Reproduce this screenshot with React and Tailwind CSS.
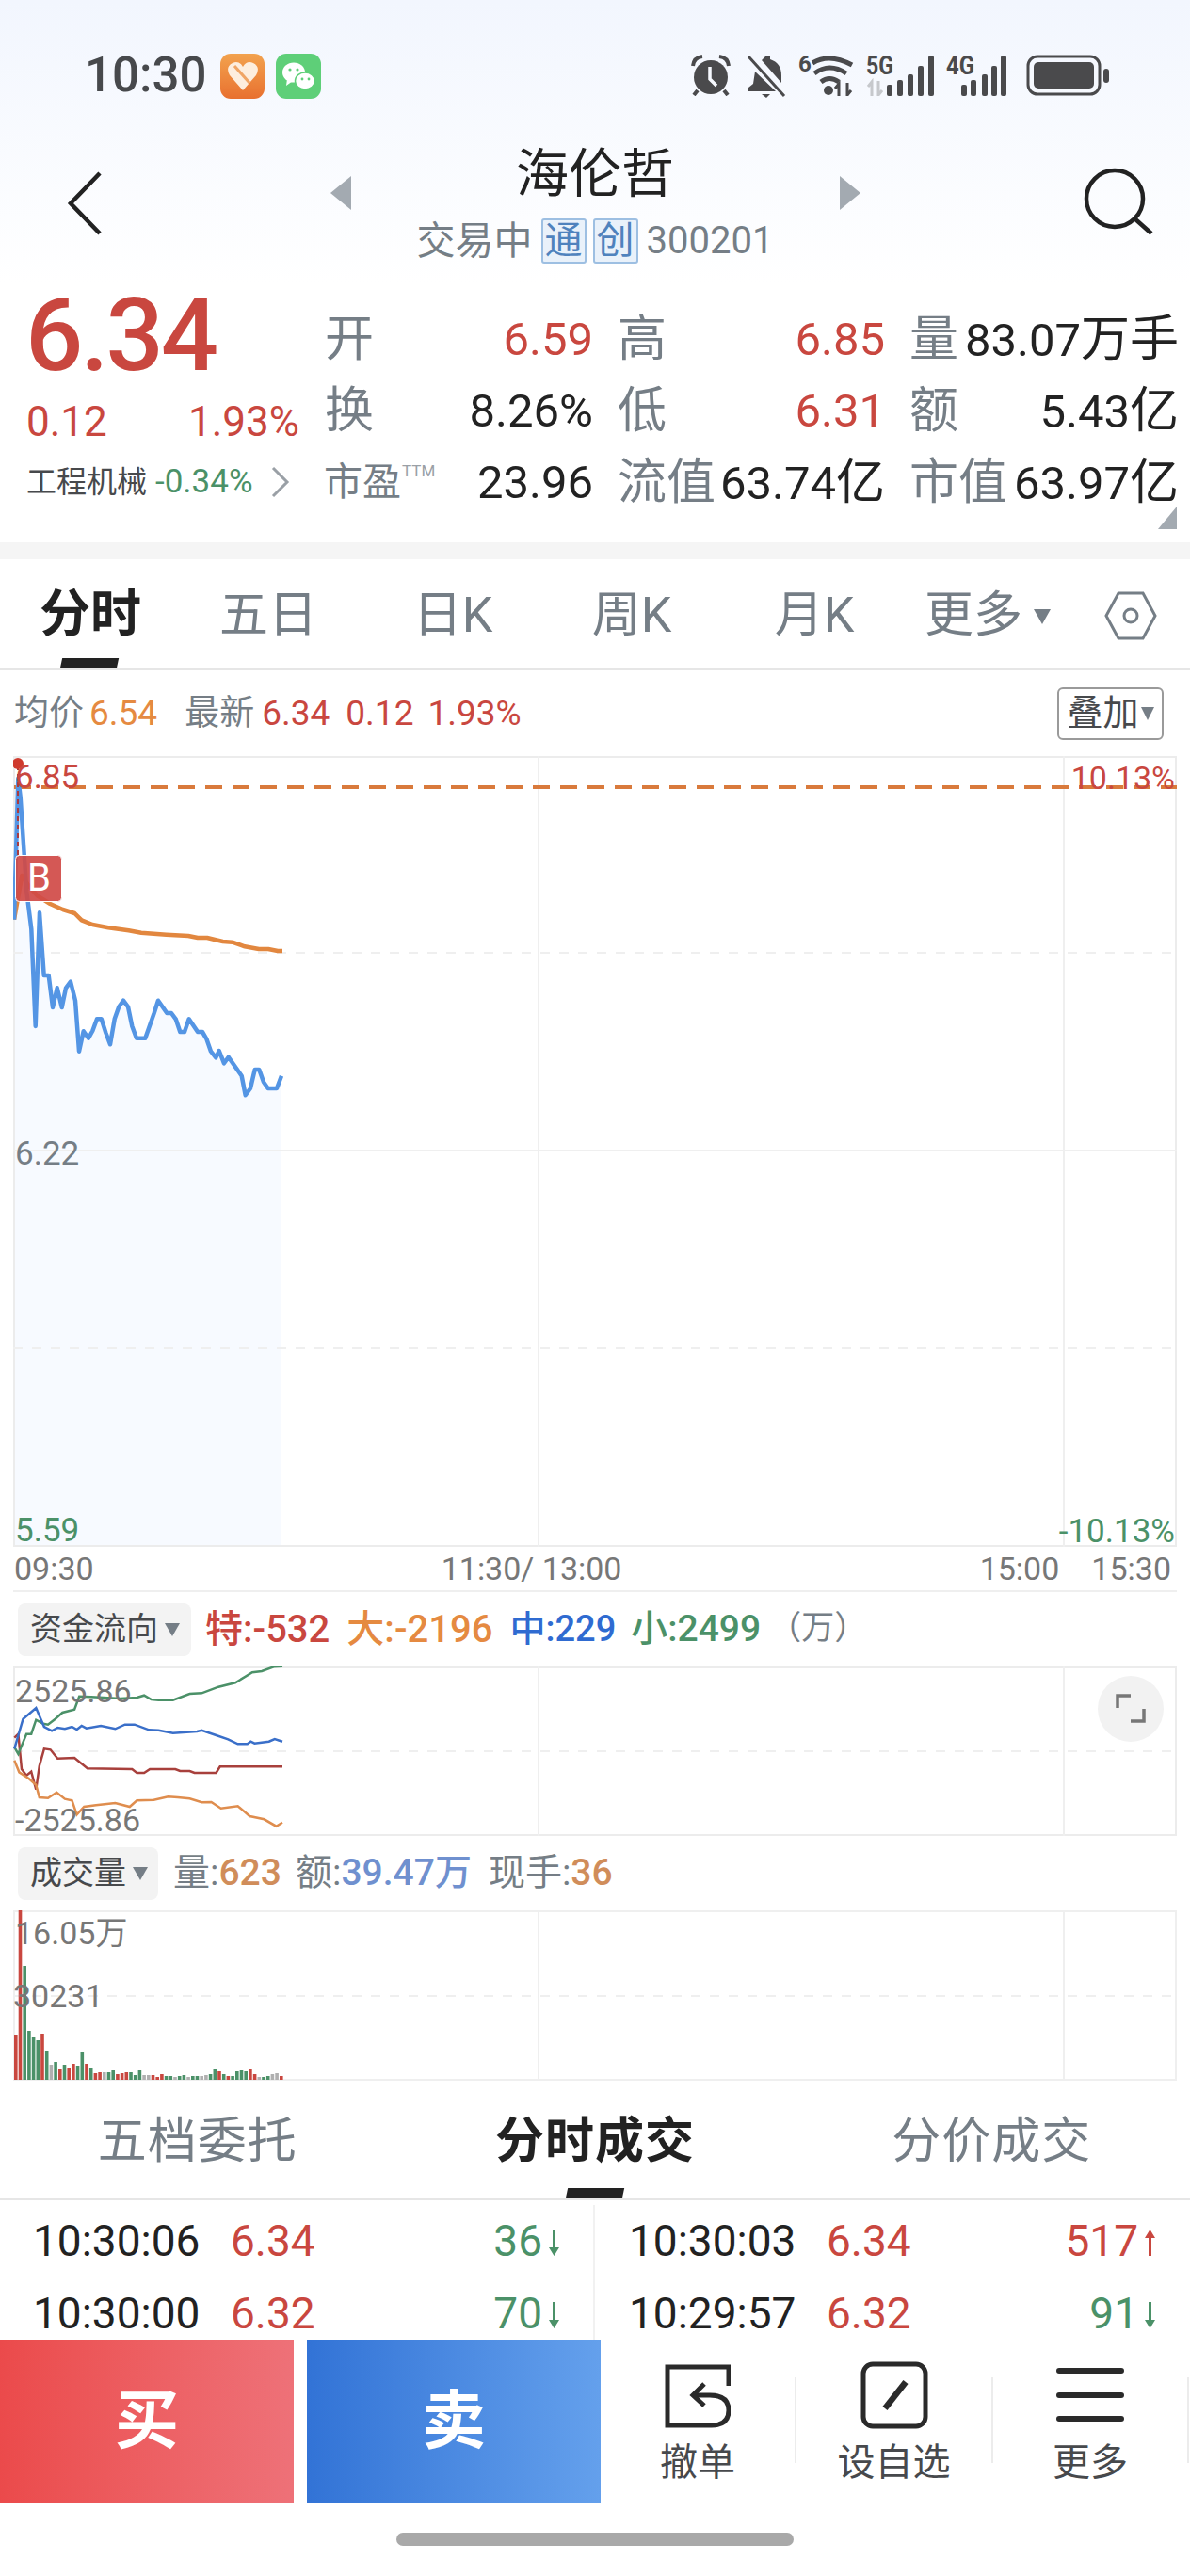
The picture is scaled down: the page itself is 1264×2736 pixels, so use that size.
const gray = "text-[#757e86]";
const red = "text-[#c9473f]";
const green = "text-[#4b9168]";

const bluePts = [[45,590],[58,140],[65,200],[85,500],[100,620],[113,930],[126,568],[140,768],[155,768],[168,870],[182,808],[197,870],[210,808],[225,788],[240,848],[252,1010],[266,946],[282,968],[295,945],[309,907],[323,907],[337,950],[351,988],[365,907],[379,868],[393,848],[408,868],[421,930],[435,968],[463,968],[491,888],[504,848],[532,888],[546,888],[560,907],[574,948],[588,948],[602,907],[630,948],[645,948],[658,970],[672,1010],[688,1030],[698,1008],[714,1048],[728,1028],[770,1088],[782,1150],[798,1128],[812,1068],[826,1068],[840,1108],[854,1128],[882,1128],[897,1088]];
const avgPts = [[45,590],[70,450],[90,480],[120,515],[160,540],[200,558],[238,570],[260,592],[295,606],[345,616],[410,625],[450,632],[530,638],[600,642],[630,648],[660,648],[710,660],[740,662],[780,676],[825,684],[855,684],[885,690],[900,690]];

const flowGreen = [[30,770],[38,792],[55,728],[65,728],[75,683],[90,695],[100,698],[115,680],[130,660],[155,650],[165,608],[190,610],[250,615],[285,612],[300,605],[315,618],[330,620],[360,620],[395,600],[420,598],[455,578],[490,565],[525,532],[545,528],[570,514],[588,512]];
const flowBlue = [[30,775],[48,680],[75,645],[92,705],[108,718],[120,708],[135,712],[150,705],[160,714],[170,702],[180,710],[210,702],[240,712],[260,698],[280,698],[310,715],[330,716],[360,725],[410,720],[420,716],[450,732],[475,745],[495,760],[515,760],[522,752],[530,758],[560,752],[572,744],[588,752]];
const flowRed = [[30,740],[38,728],[45,840],[55,860],[65,848],[75,905],[82,830],[92,775],[105,778],[120,806],[155,804],[182,838],[275,840],[285,852],[300,852],[312,840],[365,840],[375,846],[395,846],[405,852],[450,852],[458,832],[588,832]];
const flowOrange = [[30,812],[40,850],[60,870],[75,890],[82,930],[100,932],[118,914],[135,935],[150,940],[160,985],[175,960],[200,955],[240,948],[270,960],[285,940],[320,938],[350,928],[370,930],[395,934],[420,946],[440,945],[460,965],[495,958],[520,990],[550,1000],[575,1022],[588,1010]];

// r red, g green, n gray; height in px
const volBars = [["r",48],["r",180],["g",121],["g",52],["g",46],["g",42],["r",49],["g",31],["n",16],["g",19],["r",12],["g",16],["r",13],["r",17],["g",15],["g",30],["r",17],["g",13],["r",7],["r",8],["n",8],["g",8],["g",10],["r",6],["r",7],["r",8],["g",8],["g",5],["g",10],["n",5],["n",5],["r",5],["r",3],["r",6],["g",4],["g",4],["n",3],["g",4],["g",5],["n",3],["g",4],["g",4],["n",4],["n",5],["g",6],["g",11],["r",9],["g",6],["r",4],["g",4],["g",9],["g",10],["g",9],["r",11],["r",6],["n",3],["g",3],["g",4],["n",6],["n",7],["r",4]];
const volColors = { r: "#c9473f", g: "#4b9168", n: "#b0b0b0" };

const mainPath = (pts) => pts.map(([x, y]) => `${(x / 3 - 14).toFixed(1)},${(780 + y / 3 - 803).toFixed(1)}`).join(" ");
const flowPath = (pts) => pts.map(([x, y]) => `${(x / 1.96 - 14).toFixed(1)},${(1600 + y / 3 - 1771).toFixed(1)}`).join(" ");

function Alarm() {
  return (
    <svg width="44" height="44" viewBox="0 0 44 44" fill="#4a4a4c">
      <circle cx="22" cy="24" r="18" />
      <path d="M3 12 Q4 3 13 2 M41 12 Q40 3 31 2" stroke="#4a4a4c" strokeWidth="4" fill="none" />
      <path d="M8 38 L4 43 M36 38 L40 43" stroke="#4a4a4c" strokeWidth="4" />
      <path d="M21 13 V26 L28 33" stroke="#f6f9fe" strokeWidth="3.5" fill="none" />
    </svg>
  );
}

function BellOff() {
  return (
    <svg width="42" height="46" viewBox="0 0 42 46" fill="#4a4a4c" className="ml-[16px]">
      <path d="M20 2 h5 v3 Q37 9 37 22 V30 L16 6 Z" />
      <path d="M9 18 L31 39 H2 V35 L7 31 Z" />
      <path d="M16 42 h9 L21 46 Z" />
      <path d="M2 2 L40 44" stroke="#4a4a4c" strokeWidth="3" />
    </svg>
  );
}

function Wifi() {
  return (
    <svg width="62" height="50" viewBox="0 -6 62 50" fill="none" stroke="#4a4a4c" strokeWidth="5" className="ml-[13px] -mt-[6px]">
      <text x="0" y="18" fill="#4a4a4c" stroke="none" fontSize="24" fontWeight="700" fontFamily="Roboto">6</text>
      <path d="M15 9 Q33 -2 57 11" />
      <path d="M17 20 Q33 8 51 20" />
      <path d="M24 29 Q33 22 43 29" />
      <circle cx="32" cy="38" r="5" fill="#4a4a4c" stroke="none" />
      <path d="M43 44 V31 L39 36 M52 30 V43 L56 38" strokeWidth="3" />
    </svg>
  );
}

function Signal5G() {
  const bars = [[22, 12], [33, 17], [44, 23], [55, 32], [66, 43]];
  return (
    <svg width="72" height="50" viewBox="0 -6 72 50" fill="#4a4a4c" className="ml-[10px] -mt-[6px]">
      <text x="0" y="21" fontSize="28" fontWeight="700" fontFamily="Roboto" textLength="29" lengthAdjust="spacingAndGlyphs">5G</text>
      <path d="M6 44 V29 L2 34 M13 28 V43 L17 38" stroke="#c6c8cc" strokeWidth="3" fill="none" />
      {bars.map(([x, h]) => <rect key={x} x={x} y={44 - h} width="6" height={h} rx="2" />)}
    </svg>
  );
}

function Signal4G() {
  const bars = [[16, 12], [26, 17], [38, 23], [48, 32], [58, 43]];
  return (
    <svg width="66" height="50" viewBox="0 -6 66 50" fill="#4a4a4c" className="ml-[13px] -mt-[6px]">
      <text x="0" y="21" fontSize="28" fontWeight="700" fontFamily="Roboto" textLength="30" lengthAdjust="spacingAndGlyphs">4G</text>
      {bars.map(([x, h]) => <rect key={x} x={x} y={44 - h} width="6" height={h} rx="2" />)}
    </svg>
  );
}

function Battery() {
  return (
    <svg width="88" height="44" viewBox="0 0 88 44" className="ml-[19px]">
      <rect x="2" y="2" width="76" height="40" rx="10" fill="none" stroke="#4a4a4c" strokeWidth="3" />
      <rect x="8" y="8" width="64" height="28" rx="5" fill="#4a4a4c" />
      <rect x="82" y="15" width="6" height="15" rx="3" fill="#4a4a4c" />
    </svg>
  );
}

function StatusBar() {
  return (
    <div className="h-[140px] flex items-start pt-[57px] pl-[90px] pr-[86px]">
      <span className="text-[51px] leading-[46px] font-medium text-[#47494c] w-[144px]">10:30</span>
      <div className="w-[47px] h-[48px] rounded-[11px] bg-gradient-to-b from-[#f2a24e] to-[#e8702f] flex items-center justify-center">
        <svg width="34" height="32" viewBox="0 0 34 32">
          <path d="M17 31 L3 15 Q-2 6 6 2 Q13 -1 17 6 Q21 -1 28 2 Q36 6 31 15 Z" fill="#fdeede" />
          <path d="M8 5 L24 23" stroke="#f0a565" strokeWidth="3" />
        </svg>
      </div>
      <div className="w-[48px] h-[48px] ml-[12px] rounded-[11px] bg-[#5ecf78] flex items-center justify-center">
        <svg width="36" height="32" viewBox="0 0 36 32" fill="#ffffff">
          <ellipse cx="13" cy="12" rx="12" ry="10.5" />
          <path d="M6 19 L5 26 L12 21 Z" />
          <ellipse cx="25" cy="21" rx="10.5" ry="9" stroke="#5ecf78" strokeWidth="1.5" />
          <circle cx="9" cy="9" r="1.6" fill="#5ecf78" />
          <circle cx="17" cy="9" r="1.6" fill="#5ecf78" />
          <circle cx="22" cy="19" r="1.4" fill="#5ecf78" />
          <circle cx="29" cy="19" r="1.4" fill="#5ecf78" />
        </svg>
      </div>
      <div className="ml-auto flex items-start mt-[1px]">
        <Alarm />
        <BellOff />
        <Wifi />
        <Signal5G />
        <Signal4G />
        <Battery />
      </div>
    </div>
  );
}

function Header() {
  return (
    <div className="h-[160px] flex relative">
      <svg width="40" height="70" viewBox="0 0 40 70" fill="none" stroke="#222" strokeWidth="4.5" className="absolute left-[70px] top-[41px]">
        <path d="M36 3 L5 35 L36 67" />
      </svg>
      <svg width="22" height="36" viewBox="0 0 22 36" fill="#a3aab1" className="absolute left-[351px] top-[47px]"><path d="M22 0 V36 L0 18 Z" /></svg>
      <svg width="22" height="36" viewBox="0 0 22 36" fill="#a3aab1" className="absolute left-[892px] top-[47px]"><path d="M0 0 V36 L22 18 Z" /></svg>
      <svg width="74" height="72" viewBox="0 0 74 72" fill="none" stroke="#222" strokeWidth="4.5" className="absolute left-[1151px] top-[38px]">
        <circle cx="33" cy="33" r="30" />
        <path d="M54 54 L72 70" />
      </svg>
      <div className="w-full flex flex-col items-center">
        <div className="text-[56px] leading-[64px] mt-[13px] text-[#222]">海伦哲</div>
        <div className="flex items-center mt-[15px] text-[40px] leading-[48px] text-[#757e86]">
          <span className="text-[41px]">交易中</span>
          <span className="w-[48px] h-[48px] ml-[9px] rounded-[3px] border-2 border-[#9dbfe2] bg-[#e9f1fa] text-[#4f82bd] flex items-center justify-center">通</span>
          <span className="w-[48px] h-[48px] ml-[7px] rounded-[3px] border-2 border-[#9dbfe2] bg-[#e9f1fa] text-[#4f82bd] flex items-center justify-center">创</span>
          <span className="ml-[9px]">300201</span>
        </div>
      </div>
    </div>
  );
}

function QuoteCell({ label, value, unit, color = "text-[#222]" }) {
  return (
    <div className="flex justify-between items-center h-[76px] whitespace-nowrap">
      <span className={`text-[52px] ${gray}`}>{label}</span>
      <span className={`text-[49px] ${color}`}>{value}{unit && <span className="text-[52px]">{unit}</span>}</span>
    </div>
  );
}

function Quote() {
  return (
    <div className="h-[276px] flex pl-[27px] pr-[12px] relative">
      <div className="w-[318px] shrink-0 flex flex-col">
        <div className={`text-[108px] leading-[108px] mt-[2px] font-medium tracking-[-3px] ${red}`}>6.34</div>
        <div className={`flex justify-between w-[291px] text-[44px] leading-[50px] mt-[13px] pl-[1px] ${red}`}>
          <span>0.12</span>
          <span>1.93%</span>
        </div>
        <div className="flex items-center mt-[19px] h-[40px] pl-[1px] whitespace-nowrap">
          <span className="text-[32px] text-[#47494c]">工程机械</span>
          <span className={`text-[35px] ml-[9px] ${green}`}>-0.34%</span>
          <svg width="22" height="36" viewBox="0 0 22 36" fill="none" stroke="#9aa0a6" strokeWidth="3" className="ml-[18px]"><path d="M3 3 L18 18 L3 33" /></svg>
        </div>
      </div>
      <div className="grid grid-cols-[285px_284px_286px] gap-x-[26px] content-start pt-[23px] flex-1">
        <QuoteCell label="开" value="6.59" color={red} />
        <QuoteCell label="高" value="6.85" color={red} />
        <QuoteCell label="量" value="83.07" unit="万手" />
        <QuoteCell label="换" value="8.26%" />
        <QuoteCell label="低" value="6.31" color={red} />
        <QuoteCell label="额" value="5.43" unit="亿" />
        <div className="flex items-center h-[76px] whitespace-nowrap">
          <span className={`text-[41px] -ml-[1px] ${gray}`}>市盈</span>
          <span className="text-[17px] ml-[1px] -mt-[24px] text-[#9aa0a6]">TTM</span>
          <span className="text-[49px] text-[#222] ml-auto">23.96</span>
        </div>
        <QuoteCell label="流值" value="63.74" unit="亿" />
        <QuoteCell label="市值" value="63.97" unit="亿" />
      </div>
      <svg width="20" height="24" viewBox="0 0 20 24" fill="#a3aab1" className="absolute right-[14px] top-[238px]"><path d="M20 0 V24 H0 Z" /></svg>
    </div>
  );
}

function ChartTabs() {
  return (
    <div className="h-[118px] flex border-b-2 border-[#e6e6e6] relative">
      <div className="w-[192px] flex flex-col items-center">
        <span className="text-[54px] leading-[60px] mt-[29px] font-bold text-[#222]">分时</span>
      </div>
      <div className={`w-[186px] text-center text-[52px] leading-[60px] pt-[30px] ${gray}`}>五日</div>
      <div className={`w-[206px] text-center text-[52px] leading-[60px] pt-[30px] ${gray}`}>日K</div>
      <div className={`w-[174px] text-center text-[52px] leading-[60px] pt-[30px] ${gray}`}>周K</div>
      <div className={`w-[214px] text-center text-[52px] leading-[60px] pt-[30px] ${gray}`}>月K</div>
      <div className={`text-[52px] leading-[60px] pt-[30px] ml-[10px] flex ${gray}`}>
        更多
        <svg width="18" height="16" viewBox="0 0 18 16" fill="#757e86" className="ml-[12px] mt-[23px]"><path d="M0 0 H18 L9 16 Z" /></svg>
      </div>
      <svg width="58" height="54" viewBox="0 0 58 54" fill="none" stroke="#757e86" strokeWidth="3" className="absolute left-[1172px] top-[33px]">
        <path d="M3 27 L16 3 H42 L55 27 L42 51 H16 Z" />
        <circle cx="29" cy="27" r="7" />
      </svg>
      <div className="absolute left-[65px] bottom-0 w-[60px] h-[11px] bg-[#222] -skew-x-12"></div>
    </div>
  );
}

function InfoRow() {
  return (
    <div className="h-[91px] flex items-center pl-[15px] pr-[28px] text-[37px] whitespace-nowrap">
      <span className={`${gray}`}>均价</span>
      <span className="ml-[6px] text-[#e58a41]">6.54</span>
      <span className={`ml-[29px] ${gray}`}>最新</span>
      <span className={`ml-[8px] ${red}`}>6.34</span>
      <span className={`ml-[17px] ${red}`}>0.12</span>
      <span className={`ml-[15px] ${red}`}>1.93%</span>
      <div className="ml-auto w-[113px] h-[56px] rounded-[6px] border-2 border-[#9a9a9a] flex items-center justify-center text-[#47494c] text-[38px]">
        叠加
        <svg width="14" height="14" viewBox="0 0 14 14" fill="#757e86" className="ml-[2px]"><path d="M0 0 H14 L7 14 Z" /></svg>
      </div>
    </div>
  );
}

function MainChart() {
  const labelClass = "absolute text-[35px] leading-[40px]";
  return (
    <div className="ml-[14px] w-[1236px] h-[840px] relative">
      <svg width="1236" height="840" viewBox="0 0 1236 840" fill="none" className="absolute left-0 top-0">
        <path d={`M2 840 L${mainPath(bluePts)} L284.5 840 Z`} fill="#f7faff" />
        <rect x="1" y="1" width="1234" height="838" stroke="#ececec" strokeWidth="2" />
        <path d="M558 0 V840 M1116 0 V840 M0 419 H1236" stroke="#efefef" strokeWidth="2" />
        <path d="M0 209 H1236 M0 629 H1236" stroke="#efefef" strokeWidth="2" strokeDasharray="10 10" />
        <path d="M1 33 H1236" stroke="#d97a3c" strokeWidth="4" strokeDasharray="18 11" />
        <polyline points={mainPath(avgPts)} stroke="#e2873f" strokeWidth="4.5" strokeLinejoin="round" />
        <polyline points={mainPath(bluePts)} stroke="#5495e4" strokeWidth="4.5" strokeLinejoin="round" />
        <path d="M5 10 V105" stroke="#a93a40" strokeWidth="2" strokeDasharray="5 4" />
        <circle cx="5" cy="8" r="6" fill="#cf3a2e" />
        <rect x="2.5" y="105.5" width="49" height="49" rx="4" fill="#d04a47" fillOpacity="0.92" stroke="#ffffff" strokeWidth="1" />
      </svg>
      <span className="absolute left-[3px] top-[105px] w-[49px] h-[49px] flex items-center justify-center text-[40px] text-white">B</span>
      <span className={`${labelClass} left-[2px] top-[3px] ${red}`}>6.85</span>
      <span className={`absolute text-[34px] leading-[40px] right-[2px] top-[3px] ${red}`}>10.13%</span>
      <span className={`${labelClass} left-[2px] top-[403px] ${gray}`}>6.22</span>
      <span className={`${labelClass} left-[2px] top-[803px] ${green}`}>5.59</span>
      <span className={`${labelClass} right-[2px] top-[804px] ${green}`}>-10.13%</span>
    </div>
  );
}

function TimeAxis() {
  return (
    <div className="ml-[14px] w-[1236px] h-[48px] flex items-center border-b-2 border-[#efefef] relative text-[34px] text-[#777] pl-[1px] pr-[6px]">
      <span>09:30</span>
      <span className="ml-[369px]">11:30/ 13:00</span>
      <span className="ml-auto">15:00</span>
      <span className="ml-[34px]">15:30</span>
    </div>
  );
}

function Dropdown({ label, width }) {
  return (
    <div className={`${width} h-[56px] rounded-[8px] bg-[#f3f3f3] flex items-center pl-[13px] text-[34px] font-normal text-[#47494c] shrink-0`}>
      {label}
      <svg width="16" height="14" viewBox="0 0 16 14" fill="#757e86" className="ml-[7px]"><path d="M0 0 H16 L8 14 Z" /></svg>
    </div>
  );
}

function FlowRow() {
  return (
    <div className="h-[79px] flex items-center pl-[19px] text-[40px] font-medium whitespace-nowrap">
      <Dropdown label="资金流向" width="w-[184px]" />
      <span className="ml-[15px] text-[#c9473f]">特:-532</span>
      <span className="ml-[18px] text-[#e58a41]">大:-2196</span>
      <span className="ml-[18px] text-[38px] text-[#2f6bd1]">中:229</span>
      <span className="ml-[16px] text-[39px] text-[#4b9168]">小:2499</span>
      <span className={`ml-[8px] text-[35px] font-normal ${gray}`}>（万）</span>
    </div>
  );
}

function FlowChart() {
  return (
    <div className="ml-[14px] w-[1236px] h-[180px] relative">
      <svg width="1236" height="180" viewBox="0 0 1236 180" fill="none" className="absolute left-0 top-0">
        <rect x="1" y="1" width="1234" height="178" stroke="#ececec" strokeWidth="2" />
        <path d="M558 0 V180 M1116 0 V180" stroke="#efefef" strokeWidth="2" />
        <path d="M0 90 H1236" stroke="#efefef" strokeWidth="2" strokeDasharray="10 10" />
        <polyline points={flowPath(flowRed)} stroke="#a8403c" strokeWidth="2.5" />
        <polyline points={flowPath(flowOrange)} stroke="#df8d4e" strokeWidth="2.5" />
        <polyline points={flowPath(flowGreen)} stroke="#4b9168" strokeWidth="2.5" />
        <polyline points={flowPath(flowBlue)} stroke="#3a6fc9" strokeWidth="2.5" />
      </svg>
      <span className="absolute left-[2px] top-[6px] text-[34px] leading-[40px] text-[#777]">2525.86</span>
      <span className="absolute left-[2px] top-[143px] text-[34px] leading-[40px] text-[#777]">-2525.86</span>
      <div className="absolute left-[1152px] top-[10px] w-[70px] h-[70px] rounded-full bg-[#f2f2f2] flex items-center justify-center">
        <svg width="32" height="32" viewBox="0 0 32 32" fill="none" stroke="#777" strokeWidth="3.5">
          <path d="M2 15 V2 H16 M30 16 V29 H16" />
        </svg>
      </div>
    </div>
  );
}

function VolumeRow() {
  return (
    <div className="h-[79px] flex items-center pl-[19px] text-[39px] font-medium whitespace-nowrap">
      <Dropdown label="成交量" width="w-[149px]" />
      <span className={`ml-[16px] font-normal ${gray}`}>量:</span>
      <span className="text-[#d08d5a]">623</span>
      <span className={`ml-[15px] font-normal ${gray}`}>额:</span>
      <span className="text-[#6f90cf]">39.47万</span>
      <span className={`ml-[18px] font-normal ${gray}`}>现手:</span>
      <span className="text-[#d08d5a]">36</span>
    </div>
  );
}

function VolumeChart() {
  return (
    <div className="ml-[14px] w-[1236px] h-[181px] relative">
      <svg width="1236" height="181" viewBox="0 0 1236 181" fill="none" className="absolute left-0 top-0">
        <path d="M0 1 H1236 M0 180 H1236 M1 0 V181 M558 0 V181 M1116 0 V181 M1235 0 V181" stroke="#efefef" strokeWidth="2" />
        <path d="M0 91 H1236" stroke="#efefef" strokeWidth="2" strokeDasharray="10 10" />
        {volBars.map(([c, h], i) => (
          <rect key={i} x={1 + i * 4.7} y={180 - h} width="3.6" height={h} fill={volColors[c]} />
        ))}
      </svg>
      <span className="absolute left-[2px] top-[4px] text-[34px] leading-[40px] text-[#777]">16.05万</span>
      <span className="absolute left-[0px] top-[71px] text-[34px] leading-[40px] text-[#777]">30231</span>
    </div>
  );
}

function TradeTabs() {
  return (
    <div className="h-[127px] grid grid-cols-3 border-b-2 border-[#e6e6e6] relative text-center text-[52px] leading-[60px] pt-[35px]">
      <span className={`text-[52px] -ml-[2px] tracking-[1px] ${gray}`}>五档委托</span>
      <span className="font-bold text-[#222] tracking-[1px]">分时成交</span>
      <span className={`tracking-[1px] ${gray}`}>分价成交</span>
      <div className="absolute left-[602px] bottom-0 w-[60px] h-[11px] bg-[#222] -skew-x-12"></div>
    </div>
  );
}

function Arrow({ up, color }) {
  return (
    <svg width="13" height="28" viewBox="0 0 13 28" fill={color} className="ml-[6px] mt-[3px]">
      {up ? <path d="M6.5 0 L12 9 H8 V28 H5 V9 H1 Z" /> : <path d="M6.5 28 L12 19 H8 V0 H5 V19 H1 Z" />}
    </svg>
  );
}

function Trade({ time, price, vol, up }) {
  const hex = up ? "#c9473f" : "#4b9168";
  return (
    <div className="h-[77px] flex items-center text-[46px] whitespace-nowrap">
      <span className="w-[210px] text-[#222]">{time}</span>
      <span className={red}>{price}</span>
      <span className={`ml-auto ${up ? red : green}`}>{vol}</span>
      <Arrow up={up} color={hex} />
    </div>
  );
}

function Trades() {
  return (
    <div className="h-[148px] grid grid-cols-2 pt-[5px]">
      <div className="pl-[35px] pr-[35px] border-r-2 border-[#f1f1f1]">
        <Trade time="10:30:06" price="6.34" vol="36" />
        <Trade time="10:30:00" price="6.32" vol="70" />
      </div>
      <div className="pl-[36px] pr-[36px]">
        <Trade time="10:30:03" price="6.34" vol="517" up />
        <Trade time="10:29:57" price="6.32" vol="91" />
      </div>
    </div>
  );
}

function BottomBar() {
  return (
    <div className="h-[173px] flex bg-white">
      <div className="w-[312px] bg-gradient-to-r from-[#eb4a4b] to-[#ee7178] flex items-center justify-center text-[68px] font-bold text-white">买</div>
      <div className="w-[312px] ml-[14px] bg-gradient-to-r from-[#3273d6] to-[#64a0ec] flex items-center justify-center text-[68px] font-bold text-white">卖</div>
      <div className="w-[206px] flex flex-col items-center pt-[25px] text-[40px] leading-[48px] text-[#47494c]">
        <svg width="70" height="70" viewBox="0 0 70 70" fill="none" stroke="#2a2a2a" strokeWidth="5">
          <path d="M68 24 V4 H3 V66 H50 Q68 66 68 50 Q68 34 48 34 H32" />
          <path d="M42 22 L30 34 L42 45" />
        </svg>
        <span className="mt-[12px]">撤单</span>
      </div>
      <div className="w-[2px] h-[91px] mt-[40px] bg-[#ececec]"></div>
      <div className="w-[207px] flex flex-col items-center pt-[23px] text-[40px] leading-[48px] text-[#47494c]">
        <svg width="72" height="72" viewBox="0 0 72 72" fill="none" stroke="#2a2a2a" strokeWidth="5">
          <rect x="3" y="3" width="66" height="66" rx="10" />
          <path d="M48 22 L26 50" strokeWidth="6.5" />
        </svg>
        <span className="mt-[12px]">设自选</span>
      </div>
      <div className="w-[2px] h-[91px] mt-[40px] bg-[#ececec]"></div>
      <div className="w-[206px] flex flex-col items-center pt-[25px] text-[40px] leading-[48px] text-[#47494c]">
        <svg width="72" height="70" viewBox="0 0 72 70" fill="none" stroke="#2a2a2a" strokeWidth="6" strokeLinecap="round">
          <path d="M3 8 H69 M3 34 H69 M3 59 H69" />
        </svg>
        <span className="mt-[12px]">更多</span>
      </div>
      <div className="w-[2px] h-[91px] mt-[40px] bg-[#ececec]"></div>
    </div>
  );
}

export default function App() {
  return (
    <div className="w-[1264px] h-[2736px] bg-white overflow-hidden font-[Roboto,'Noto_Sans_CJK_SC',sans-serif]">
      <div className="bg-gradient-to-b from-[#f2f6fe] to-white">
        <StatusBar />
        <Header />
      </div>
      <Quote />
      <div className="h-[18px] bg-[#f5f5f5]"></div>
      <ChartTabs />
      <InfoRow />
      <MainChart />
      <TimeAxis />
      <FlowRow />
      <FlowChart />
      <VolumeRow />
      <VolumeChart />
      <TradeTabs />
      <Trades />
      <BottomBar />
      <div className="w-[422px] h-[14px] mt-[32px] mx-auto rounded-full bg-[#a9a9a9]"></div>
    </div>
  );
}
